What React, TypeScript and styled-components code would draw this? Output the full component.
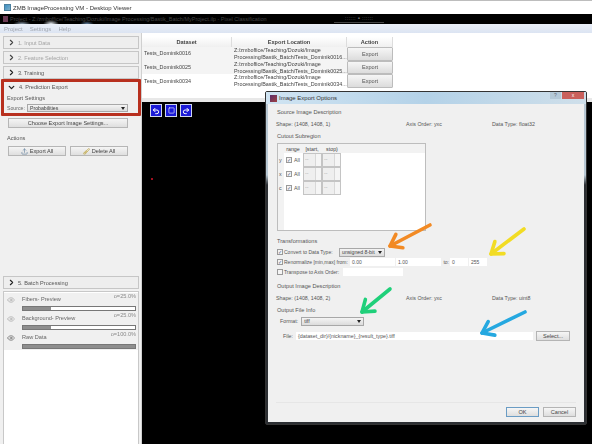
import React from "react";
import styled, { createGlobalStyle } from "styled-components";
import { ChevronRight, ChevronDown, Eye, Upload, Brush, Undo2, Redo2, Square } from "lucide-react";

const Global = createGlobalStyle`
  html, body { margin: 0; padding: 0; background: #000; }
  body { width: 592px; height: 444px; overflow: hidden; }
  * { box-sizing: border-box; }
`;

const Screen = styled.div`
  position: relative;
  width: 592px;
  height: 444px;
  overflow: hidden;
  display: flex;
  flex-direction: column;
  font-family: "Liberation Sans", Arial, sans-serif;
  font-size: 6px;
  color: #333;
  filter: blur(0.3px);
`;
const TitleBar = styled.div`
  height: 14px;
  flex: none;
  background: #fff;
  border-top: 1px solid #bdbdbd;
  display: flex;
  align-items: center;
  gap: 2px;
  padding: 0 0 0 4px;
  font-size: 6px;
  color: #333;
`;
const AppIcon = styled.span`
  width: 7px;
  height: 7px;
  background: linear-gradient(135deg, #3d8fc4, #7fb0c8);
  border: 1px solid #4a7f9e;
`;
const BlackBar = styled.div`
  height: 10px;
  flex: none;
  background:
    radial-gradient(ellipse 9px 3px at 22px 10px, #8fa0b0, transparent),
    radial-gradient(ellipse 8px 4px at 51px 10px, #e8eef4, transparent),
    radial-gradient(ellipse 7px 3px at 87px 10px, #5f7f9f, transparent),
    #000;
  display: flex;
  align-items: center;
  padding-left: 3px;
  color: #444;
  font-size: 5.5px;
  white-space: nowrap;
  position: relative;
`;
const MiniIcon = styled.span`
  width: 5px;
  height: 6px;
  background: #6b3b55;
  margin-right: 2px;
`;
const Dots = styled.span`
  position: absolute;
  left: 334px;
  top: 2px;
  width: 50px;
  height: 7px;
  border-bottom: 1px solid #444;
  color: #777;
  font-size: 6px;
  letter-spacing: 0.2px;
  text-align: center;
  line-height: 4px;
`;
const MenuBar = styled.div`
  height: 9px;
  flex: none;
  background: linear-gradient(#eaeff8, #dce4f2);
  display: flex;
  align-items: center;
  gap: 7px;
  padding-left: 4px;
  color: #a2a7b0;
  font-size: 6px;
`;
const Main = styled.div`
  flex: 1;
  display: flex;
  min-height: 0;
`;
const Sidebar = styled.div`
  width: 142px;
  flex: none;
  background: #f0f0f0;
  display: flex;
  flex-direction: column;
  padding: 3px 2px 0 3px;
  border-right: 1px solid #d0d0d0;
`;
const StepHeader = styled.div<{ $dim?: boolean }>`
  height: 13px;
  flex: none;
  display: flex;
  align-items: center;
  gap: 2px;
  padding-left: 3px;
  margin-bottom: 2px;
  background: #eeeeee;
  border: 1px solid #c6c6c6;
  color: ${(p) => (p.$dim ? "#a4a4a4" : "#555")};
  font-size: 5.6px;
`;
const RedSection = styled.section`
  margin: -2px -2px 0;
  height: 37px;
  flex: none;
  border: 3px solid #b8301f;
  border-radius: 1px;
  padding: 0 2px 0 3px;
  display: flex;
  flex-direction: column;
  font-size: 5.6px;
`;
const OpenStep = styled.div`
  height: 10px;
  flex: none;
  display: flex;
  align-items: center;
  gap: 3px;
  color: #555;
`;
const SmallLabel = styled.div`
  height: 12px;
  flex: none;
  display: flex;
  align-items: center;
  color: #555;
`;
const SourceRow = styled.div`
  display: flex;
  align-items: center;
  color: #666;
  font-size: 5.2px;
`;
const SourceLabel = styled.span`
  width: 20px;
  flex: none;
`;
const Combo = styled.div<{ $w: number; $h?: number }>`
  width: ${(p) => p.$w}px;
  height: ${(p) => p.$h ?? 9}px;
  flex: none;
  display: flex;
  align-items: center;
  justify-content: space-between;
  padding: 0 2px;
  background: linear-gradient(#f4f4f4, #dcdcdc);
  border: 1px solid #a8a8a8;
  color: #444;
  font-size: 5.2px;
  white-space: nowrap;
  &::after {
    content: "";
    border-left: 2px solid transparent;
    border-right: 2px solid transparent;
    border-top: 3px solid #222;
  }
`;
const SideBtn = styled.div<{ $w?: number }>`
  width: ${(p) => (p.$w ? `${p.$w}px` : "120px")};
  height: 10px;
  display: flex;
  align-items: center;
  justify-content: center;
  gap: 2px;
  background: linear-gradient(#f5f5f5, #dfdfdf);
  border: 1px solid #b6b6b6;
  color: #444;
  font-size: 5.6px;
`;
const ChooseWrap = styled.div`
  margin: 2px 0 0 5px;
`;
const ActionsTitle = styled.div`
  margin: 6px 0 0 4px;
  height: 8px;
  line-height: 8px;
  color: #555;
  font-size: 5.6px;
`;
const ActionRow = styled.div`
  display: flex;
  gap: 4px;
  margin: 4px 0 0 5px;
`;
const Batch = styled(StepHeader)`
  margin-bottom: 2px;
`;
const BatchSpacer = styled.div`
  height: 120px;
  flex: none;
`;
const LayerList = styled.div`
  flex: 1;
  background: #fff;
  border: 1px solid #c8c8c8;
  border-bottom: 0;
  padding-top: 1px;
`;
const Layer = styled.div`
  height: 19px;
  background: #f0f0f0;
  display: grid;
  grid-template-columns: 18px 1fr;
  padding-right: 2px;
`;
const EyeCell = styled.div<{ $dark?: boolean }>`
  padding: 3px 0 0 3px;
  color: ${(p) => (p.$dark ? "#666" : "#aaa")};
`;
const LayerBody = styled.div`
  display: flex;
  flex-direction: column;
`;
const LayerTop = styled.div`
  display: flex;
  justify-content: space-between;
  height: 13px;
  color: #666;
  font-size: 5.6px;
  padding-top: 3px;
`;
const Opacity = styled.span`
  margin-top: -3px;
  color: #8a8a8a;
`;
const Bar = styled.div`
  height: 5px;
  background: #fff;
  border: 1px solid #777;
`;
const BarFill = styled.div`
  height: 100%;
  background: #8e8e8e;
`;
const Right = styled.div`
  flex: 1;
  display: flex;
  flex-direction: column;
  min-width: 0;
`;
const TablePanel = styled.div`
  height: 69px;
  flex: none;
  background: #fff;
  padding-top: 4px;
  border-bottom: 4px solid #e8e8e8;
`;
const DataGrid = styled.div`
  width: 251px;
  display: grid;
  grid-template-columns: 90px 115px 46px;
`;
const Head = styled.div`
  height: 10px;
  background: linear-gradient(#fff, #f0f0f0);
  border-right: 1px solid #ddd;
  display: flex;
  align-items: center;
  justify-content: center;
  font-weight: bold;
  font-size: 5.6px;
  color: #444;
`;
const Cell = styled.div<{ $alt?: boolean }>`
  height: 13.7px;
  background: ${(p) => (p.$alt ? "#f4f4f4" : "#fff")};
  display: flex;
  align-items: center;
  padding-left: 2px;
  color: #444;
  font-size: 5.4px;
  line-height: 7px;
  white-space: nowrap;
`;
const RowBtn = styled.div`
  height: 13.5px;
  background: linear-gradient(#f6f6f6, #dcdcdc);
  border: 1px solid #bcbcbc;
  border-radius: 1px;
  display: flex;
  align-items: center;
  justify-content: center;
  color: #555;
  font-size: 5.6px;
`;
const Viewer = styled.div`
  flex: 1;
  background: #000;
  position: relative;
  padding: 2px 0 0 8px;
  display: flex;
  gap: 3px;
  align-items: flex-start;
`;
const ViewBtn = styled.div`
  width: 12px;
  height: 13px;
  background: #1a1ad8;
  border: 1.5px solid #cfd6ee;
  color: #fff;
  display: flex;
  align-items: center;
  justify-content: center;
`;
const RedDot = styled.span`
  position: absolute;
  left: 9px;
  top: 76px;
  width: 2px;
  height: 2px;
  background: #a01020;
`;

/* Dialog floating above the viewer */
const Dialog = styled.div`
  position: absolute;
  left: 265px;
  top: 91px;
  width: 322px;
  height: 334px;
  background: linear-gradient(#b8c8d4 0, #b8c8d4 25%, #2c2f33 28%);
  border: 1px solid #333;
  border-radius: 2px;
  padding: 0 2px 2px;
  display: flex;
  flex-direction: column;
`;
const DialogTitle = styled.div`
  height: 12px;
  flex: none;
  margin: 0 -2px;
  background: linear-gradient(90deg, #d0e4f2, #b4d2e8 50%, #cfdfea);
  display: flex;
  align-items: center;
  gap: 2px;
  padding-left: 4px;
  color: #333;
  font-size: 6px;
`;
const DlgIcon = styled.span`
  width: 7px;
  height: 7px;
  background: linear-gradient(135deg, #5a2d6a, #a04040);
`;
const WinBtns = styled.div`
  margin-left: auto;
  margin-right: 2px;
  align-self: flex-start;
  display: flex;
  gap: 1px;
`;
const Help = styled.span`
  width: 11px;
  height: 7px;
  background: #b4c9d8;
  color: #667;
  font-size: 5px;
  text-align: center;
  line-height: 7px;
`;
const Close = styled.span`
  width: 22px;
  height: 7px;
  background: #c9605c;
  color: #fff;
  font-size: 5px;
  text-align: center;
  line-height: 7px;
`;
const DialogBody = styled.div`
  flex: 1;
  background: #f0f0f0;
  padding: 4px 2px 0 8px;
  display: flex;
  flex-direction: column;
  color: #555;
  font-size: 5.3px;
  min-height: 0;
`;
const GroupTitle = styled.div`
  height: 8px;
  line-height: 8px;
  padding-left: 1px;
  color: #555;
  font-size: 5.6px;
  flex: none;
`;
const InfoRow = styled.div`
  height: 11px;
  flex: none;
  margin-top: 2px;
  display: grid;
  grid-template-columns: 130px 86px 1fr;
  align-items: center;
`;
const Cutout = styled(GroupTitle)`
  margin-top: 3px;
`;
const RangeTable = styled.div`
  width: 149px;
  height: 88px;
  flex: none;
  margin-top: 3px;
  margin-left: 1px;
  background: #fff;
  border: 1px solid #bdbdbd;
  display: grid;
  grid-template-columns: 6px 1fr;
  grid-template-rows: 9px 1fr;
`;
const Gutter = styled.div`
  background: #f2f2f2;
  grid-row: 1 / 3;
`;
const RangeHead = styled.div`
  background: #f2f2f2;
  display: flex;
  align-items: center;
  width: 100%;
  color: #444;
`;
const HeadCell = styled.span<{ $w: number }>`
  width: ${(p) => p.$w}px;
  text-align: center;
`;
const RangeBody = styled.div`
  display: flex;
  flex-direction: column;
`;
const RangeLine = styled.div`
  height: 14px;
  display: flex;
  align-items: center;
  gap: 2px;
  padding-left: 2px;
  position: relative;
`;
const AxisTag = styled.span`
  position: absolute;
  left: -5px;
  color: #555;
`;
const Check = styled.span`
  width: 6px;
  height: 6px;
  flex: none;
  background: #f4f4f4;
  border: 1px solid #9a9a9a;
  color: #4a5a88;
  font-size: 5px;
  line-height: 4px;
  text-align: center;
`;
const Spin = styled.span`
  width: 19px;
  height: 14px;
  background: #efefef;
  border: 1px solid #c4c4c4;
  color: #aaa;
  padding-left: 1px;
  line-height: 11px;
  position: relative;
  &::after {
    content: "";
    position: absolute;
    right: 0;
    top: 0;
    bottom: 0;
    width: 5px;
    border-left: 1px solid #d8d8d8;
    background: #f5f5f5;
  }
`;
const SpinGroup = styled.span`
  display: flex;
  margin-left: 1px;
`;
const TransTitle = styled(GroupTitle)`
  margin-top: 6px;
  margin-bottom: 2px;
`;
const OptionRow = styled.div`
  height: 10px;
  flex: none;
  display: flex;
  align-items: center;
  gap: 1px;
  padding-left: 1px;
  color: #555;
  font-size: 5px;
  white-space: nowrap;
`;
const OptionLabel = styled.span<{ $w: number }>`
  width: ${(p) => p.$w}px;
  flex: none;
`;
const Field = styled.span<{ $w: number }>`
  width: ${(p) => p.$w}px;
  height: 8px;
  background: #fff;
  padding-left: 2px;
  line-height: 8px;
  color: #555;
  flex: none;
`;
const OutputTitle = styled(GroupTitle)`
  margin-top: 5px;
`;
const FileInfoTitle = styled(GroupTitle)`
  margin-top: 3px;
`;
const FormatRow = styled.div`
  height: 10px;
  flex: none;
  display: flex;
  align-items: center;
  gap: 3px;
  padding-left: 4px;
  margin-top: 2px;
`;
const FileRow = styled.div`
  height: 11px;
  flex: none;
  display: flex;
  align-items: center;
  gap: 3px;
  padding-left: 7px;
  margin-top: 4px;
`;
const DlgBtn = styled.div<{ $primary?: boolean }>`
  width: 33px;
  height: 10px;
  background: linear-gradient(#f6f6f6, #dedede);
  border: 1px solid ${(p) => (p.$primary ? "#6a9cc4" : "#b4b4b4")};
  display: flex;
  align-items: center;
  justify-content: center;
  color: #444;
  font-size: 5.6px;
`;
const SelectBtn = styled(DlgBtn)`
  width: 34px;
`;
const DialogFooter = styled.div`
  margin-top: auto;
  margin-right: 6px;
  margin-bottom: 5px;
  padding-top: 4px;
  border-top: 1px solid #e6e6e6;
  display: flex;
  justify-content: flex-end;
  gap: 4px;
`;
const Annotations = styled.svg`
  position: absolute;
  left: 0;
  top: 0;
  pointer-events: none;
`;

const Arrow = ({ x1, y1, x2, y2, color }: { x1: number; y1: number; x2: number; y2: number; color: string }) => {
  const a = Math.atan2(y1 - y2, x1 - x2);
  const l = 13;
  const s = 0.62;
  const p = (t: number) => `${x2 + l * Math.cos(a + t)} ${y2 + l * Math.sin(a + t)}`;
  return (
    <g stroke={color} strokeWidth={3.6} fill="none" strokeLinecap="round" strokeLinejoin="round">
      <path d={`M${x1} ${y1} L${x2} ${y2}`} />
      <path d={`M${p(s)} L${x2} ${y2} L${p(-s)}`} />
    </g>
  );
};

const rows = [
  ["Tests_Dominik0016", "0016..."],
  ["Tests_Dominik0025", "0025..."],
  ["Tests_Dominik0034", "0034..."],
];
const layers = [
  { name: "Fibers- Preview", op: "o=25.0%", pct: 25, dark: false },
  { name: "Background- Preview", op: "o=25.0%", pct: 25, dark: false },
  { name: "Raw Data", op: "o=100.0%", pct: 100, dark: true },
];

export default function App() {
  return (
    <Screen>
      <Global />
      <TitleBar>
        <AppIcon />
        ZMB ImageProcessing VM - Desktop Viewer
      </TitleBar>
      <BlackBar>
        <MiniIcon />
        Project - Z:/zmboffice/Teaching/Dozuki/Image Processing/Bastik_Batch/MyProject.ilp - Pixel Classification
        <Dots>:::::: ▪ ::::::</Dots>
      </BlackBar>
      <MenuBar>
        <span>Project</span>
        <span>Settings</span>
        <span>Help</span>
      </MenuBar>
      <Main>
        <Sidebar>
          <StepHeader $dim>
            <ChevronRight size={9} strokeWidth={3} color="#444" />
            1. Input Data
          </StepHeader>
          <StepHeader $dim>
            <ChevronRight size={9} strokeWidth={3} color="#444" />
            2. Feature Selection
          </StepHeader>
          <StepHeader>
            <ChevronRight size={9} strokeWidth={3} color="#222" />
            3. Training
          </StepHeader>
          <RedSection>
            <OpenStep>
              <ChevronDown size={9} strokeWidth={3.5} color="#222" />
              4. Prediction Export
            </OpenStep>
            <SmallLabel>Export Settings</SmallLabel>
            <SourceRow>
              <SourceLabel>Source:</SourceLabel>
              <Combo $w={101} $h={8}>Probabilities</Combo>
            </SourceRow>
          </RedSection>
          <ChooseWrap>
            <SideBtn>Choose Export Image Settings...</SideBtn>
          </ChooseWrap>
          <ActionsTitle>Actions</ActionsTitle>
          <ActionRow>
            <SideBtn $w={58}>
              <Upload size={7} color="#5a7a9a" />
              Export All
            </SideBtn>
            <SideBtn $w={58}>
              <Brush size={7} color="#b89a20" />
              Delete All
            </SideBtn>
          </ActionRow>
          <BatchSpacer />
          <Batch>
            <ChevronRight size={9} strokeWidth={3} color="#222" />
            5. Batch Processing
          </Batch>
          <LayerList>
            {layers.map((l) => (
              <Layer key={l.name}>
                <EyeCell $dark={l.dark}>
                  <Eye size={8} />
                </EyeCell>
                <LayerBody>
                  <LayerTop>
                    {l.name}
                    <Opacity>{l.op}</Opacity>
                  </LayerTop>
                  <Bar>
                    <BarFill style={{ width: `${l.pct}%` }} />
                  </Bar>
                </LayerBody>
              </Layer>
            ))}
          </LayerList>
        </Sidebar>
        <Right>
          <TablePanel>
            <DataGrid>
              <Head>Dataset</Head>
              <Head>Export Location</Head>
              <Head>Action</Head>
              {rows.map(([name, tail], i) => (
                <React.Fragment key={name}>
                  <Cell $alt={i < 2}>{name}</Cell>
                  <Cell $alt={i < 2}>
                    <span>
                      Z:/zmboffice/Teaching/Dozuki/Image
                      <br />
                      Processing/Bastik_Batch/Tests_Dominik{tail}
                    </span>
                  </Cell>
                  <RowBtn>Export</RowBtn>
                </React.Fragment>
              ))}
            </DataGrid>
          </TablePanel>
          <Viewer>
            <ViewBtn>
              <Undo2 size={8} strokeWidth={3} />
            </ViewBtn>
            <ViewBtn>
              <Square size={7} fill="#1a1ad8" strokeWidth={2} />
            </ViewBtn>
            <ViewBtn>
              <Redo2 size={8} strokeWidth={3} />
            </ViewBtn>
            <RedDot />
          </Viewer>
        </Right>
      </Main>

      <Dialog>
        <DialogTitle>
          <DlgIcon />
          Image Export Options
          <WinBtns>
            <Help>?</Help>
            <Close>x</Close>
          </WinBtns>
        </DialogTitle>
        <DialogBody>
          <GroupTitle>Source Image Description</GroupTitle>
          <InfoRow>
            <span>Shape: (1408, 1408, 1)</span>
            <span>Axis Order: yxc</span>
            <span>Data Type: float32</span>
          </InfoRow>
          <Cutout>Cutout Subregion</Cutout>
          <RangeTable>
            <Gutter />
            <RangeHead>
              <HeadCell $w={18}>range</HeadCell>
              <HeadCell $w={20}>[start,</HeadCell>
              <HeadCell $w={20}>stop)</HeadCell>
            </RangeHead>
            <RangeBody>
              {["y", "x", "c"].map((axis) => (
                <RangeLine key={axis}>
                  <AxisTag>{axis}</AxisTag>
                  <Check>✓</Check>
                  All
                  <SpinGroup>
                    <Spin>--</Spin>
                    <Spin>--</Spin>
                  </SpinGroup>
                </RangeLine>
              ))}
            </RangeBody>
          </RangeTable>
          <TransTitle>Transformations</TransTitle>
          <OptionRow>
            <Check>✓</Check>
            <OptionLabel $w={54}>Convert to Data Type:</OptionLabel>
            <Combo $w={46}>unsigned 8-bit</Combo>
          </OptionRow>
          <OptionRow>
            <Check>✓</Check>
            <OptionLabel $w={65}>Renormalize [min,max] from:</OptionLabel>
            <Field $w={45}>0.00</Field>
            <Field $w={45}>1.00</Field>
            <OptionLabel $w={7}>&nbsp;to:</OptionLabel>
            <Field $w={18}>0</Field>
            <Field $w={18}>255</Field>
          </OptionRow>
          <OptionRow>
            <Check />
            <OptionLabel $w={58}>Transpose to Axis Order:</OptionLabel>
            <Field $w={60} />
          </OptionRow>
          <OutputTitle>Output Image Description</OutputTitle>
          <InfoRow>
            <span>Shape: (1408, 1408, 2)</span>
            <span>Axis Order: yxc</span>
            <span>Data Type: uint8</span>
          </InfoRow>
          <FileInfoTitle>Output File Info</FileInfoTitle>
          <FormatRow>
            Format:
            <Combo $w={63}>tiff</Combo>
          </FormatRow>
          <FileRow>
            File:
            <Field $w={237}>{"{dataset_dir}/{nickname}_{result_type}.tiff"}</Field>
            <SelectBtn>Select...</SelectBtn>
          </FileRow>
          <DialogFooter>
            <DlgBtn $primary>OK</DlgBtn>
            <DlgBtn>Cancel</DlgBtn>
          </DialogFooter>
        </DialogBody>
      </Dialog>

      <Annotations width={592} height={444} viewBox="0 0 592 444">
        <Arrow x1={430} y1={225} x2={390} y2={246} color="#f28a24" />
        <Arrow x1={524} y1={229} x2={491} y2={254} color="#f2dc24" />
        <Arrow x1={390} y1={289} x2={362} y2={312} color="#1fd07a" />
        <Arrow x1={525} y1={312} x2={482} y2={333} color="#25a8e0" />
      </Annotations>
    </Screen>
  );
}
